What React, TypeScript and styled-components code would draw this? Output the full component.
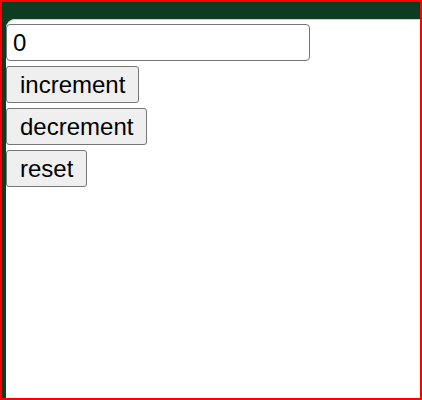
import React, { useState } from "react";
import styled, { createGlobalStyle } from "styled-components";

const Global = createGlobalStyle`
  html, body { margin: 0; padding: 0; overflow: hidden; background: #fff; }
  * { box-sizing: border-box; }
`;

const Frame = styled.div`
  width: 422px;
  height: 400px;
  border: 2px solid #ff0000;
  background: #0d3d20;
  padding: 17px 0 0 4px;
  display: flex;
`;

const Panel = styled.div`
  flex: 1;
  background: #ffffff;
  border-top-left-radius: 9px;
  box-shadow: inset 0 1px 0 #c8d0ca;
  padding-top: 5px;
  display: flex;
  flex-direction: column;
  align-items: flex-start;
  gap: 5px;
  font-family: "Liberation Sans", Arial, sans-serif;
`;

const CountInput = styled.input`
  width: 304px;
  height: 37px;
  margin: 0;
  padding: 0 6px;
  font-family: "Liberation Sans", Arial, sans-serif;
  font-size: 24px;
  color: #000;
  background: #fff;
  border: 1px solid #767676;
  border-radius: 4px;
  outline: none;
`;

const Button = styled.button`
  margin: 0;
  height: 37px;
  padding: 0 12.5px 0 13px;
  font-family: "Liberation Sans", Arial, sans-serif;
  font-size: 24px;
  line-height: 27px;
  color: #000;
  background: #efefef;
  border: 1px solid #767676;
  border-radius: 3px;
`;

export default function App() {
  const [count, setCount] = useState(0);
  return (
    <>
      <Global />
      <Frame>
        <Panel>
          <CountInput value={String(count)} readOnly />
          <Button onClick={() => setCount(count + 1)}>increment</Button>
          <Button onClick={() => setCount(count - 1)}>decrement</Button>
          <Button onClick={() => setCount(0)}>reset</Button>
        </Panel>
      </Frame>
    </>
  );
}
